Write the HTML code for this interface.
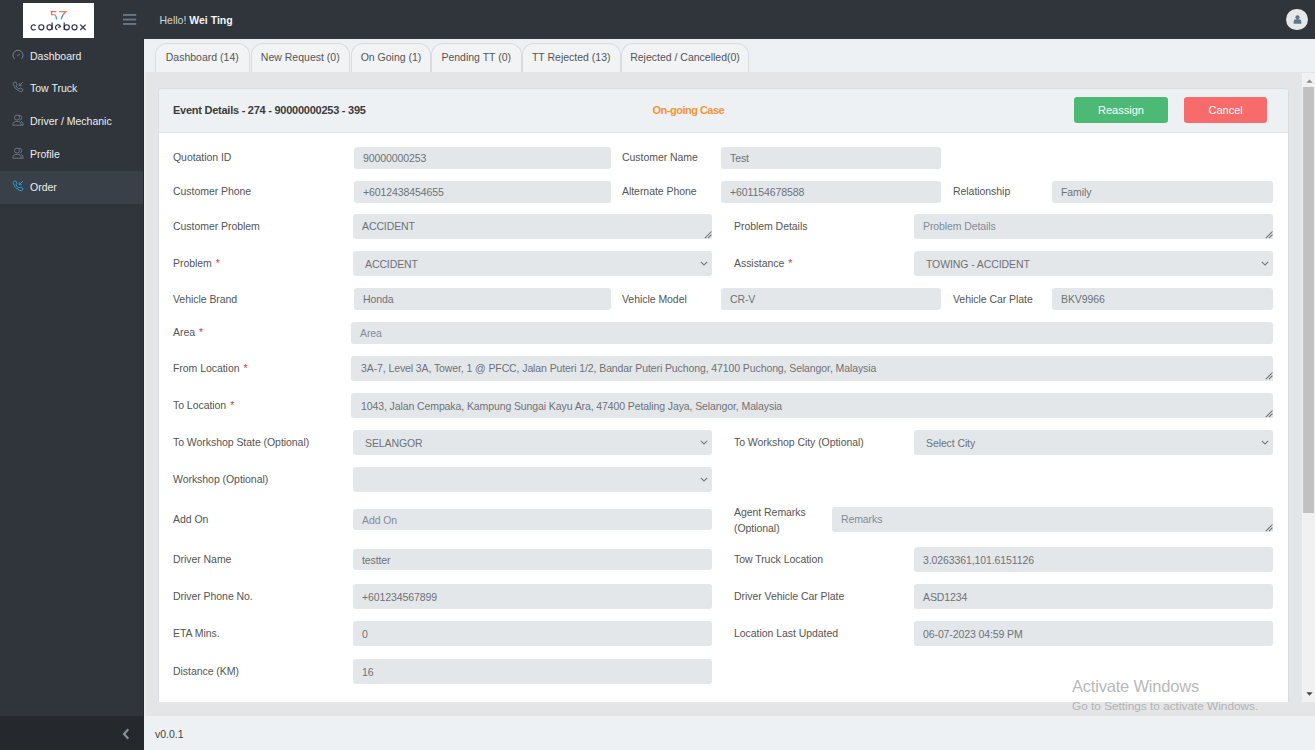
<!DOCTYPE html><html><head><meta charset="utf-8"><style>
*{margin:0;padding:0;box-sizing:border-box}
html,body{width:1315px;height:750px;overflow:hidden;background:#e4e5e6;font-family:"Liberation Sans", sans-serif}
.abs{position:absolute}
#hdr{position:absolute;left:0;top:0;width:1315px;height:39px;background:#30353b}
#side{position:absolute;left:0;top:39px;width:144px;height:677px;background:#30353b}
#sidebot{position:absolute;left:0;top:716px;width:144px;height:34px;background:#25292d}
#tabbar{position:absolute;left:144px;top:39px;width:1171px;height:33px;background:#eef1f4}
#footer{position:absolute;left:144px;top:716px;width:1171px;height:34px;background:#eef1f4}
#card{position:absolute;left:158px;top:87.5px;width:1130.5px;height:614.5px;background:#fff;border:1px solid #d9dde1;border-bottom:none;border-radius:4px 4px 0 0;overflow:hidden}
#cardhdr{position:absolute;left:0;top:0;width:100%;height:44px;background:#eef1f4;border-bottom:1.5px solid #dfe3e7}
.lbl{position:absolute;display:flex;align-items:center;padding-bottom:1px;font-size:10.5px;color:#555;white-space:nowrap;letter-spacing:-0.05px}
.req{color:#e53935;margin-left:4px}
.inp{position:absolute;background:#e4e7ea;border-radius:3px;display:flex;align-items:center;font-size:10.5px;color:#6d7278;white-space:nowrap;overflow:hidden;letter-spacing:-0.1px}
.inp.ph{color:#828b95}
.inp.ta{border-bottom-right-radius:0}
.chev{position:absolute}
.grip{position:absolute;right:0.5px;bottom:0.5px}
.tab{position:absolute;top:42.5px;height:29.5px;padding-bottom:2px;background:#f1f3f5;border:1px solid #d9dcdf;border-bottom:none;border-radius:12px 12px 0 0;font-size:10.5px;color:#555;display:flex;align-items:center;justify-content:center;white-space:nowrap}
.nav{position:absolute;left:0;width:144px;height:33px;display:flex;align-items:center;font-size:10.5px;color:#eceef0}
.nav span{position:absolute;left:30px}
.nav svg{position:absolute;left:12px;top:9.6px}
.btn{position:absolute;top:96.8px;height:26.2px;border-radius:3px;color:#fff;font-size:11px;display:flex;align-items:center;justify-content:center}
</style></head><body><div id="hdr"></div>
<div class="abs" style="left:23px;top:3px;width:71px;height:35px;background:#fff"></div>
<svg class="abs" style="left:0;top:0" width="100" height="40" viewBox="0 0 100 40">
<defs><linearGradient id="g5" x1="0" y1="0" x2="0.4" y2="1"><stop offset="0" stop-color="#ff3fa4"/><stop offset="0.45" stop-color="#ff8a3d"/><stop offset="1" stop-color="#1aa7ff"/></linearGradient>
<linearGradient id="g7" x1="1" y1="0" x2="0.2" y2="1"><stop offset="0" stop-color="#ff7a3d"/><stop offset="0.4" stop-color="#b98a7a"/><stop offset="1" stop-color="#1aa7ff"/></linearGradient></defs>
<path d="M56.3 11.7 H51.5 V14.7 H54 Q56.4 15 56.4 19.4" fill="none" stroke="url(#g5)" stroke-width="1.3"/>
<path d="M59.2 11.7 H65.8 Q62.2 14.5 61.2 19.4" fill="none" stroke="url(#g7)" stroke-width="1.3"/>
<g fill="none" stroke="#272a55" stroke-width="1.15">
<path d="M35.6 25.6 A2.6 2.6 0 1 0 35.6 29.2"/>
<circle cx="41.3" cy="27.3" r="2.55"/>
<circle cx="49.5" cy="27.3" r="2.55"/><path d="M52.1 22.6 V29.9"/>
<path d="M57.4 29.8 A2.55 2.55 0 1 1 60.5 26.6 L58.2 27.5"/>
<circle cx="66.8" cy="27.3" r="2.55"/><path d="M64.2 22.6 V29.9"/>
<circle cx="74.5" cy="27.3" r="2.55"/>
<path d="M80.3 24.6 L85.6 30 M85.6 24.6 L80.3 30"/>
</g></svg>
<svg class="abs" style="left:120px;top:10px" width="20" height="20" viewBox="0 0 20 20"><g fill="#6a7682"><rect x="3" y="4" width="13.2" height="1.9"/><rect x="3" y="8.6" width="13.2" height="1.9"/><rect x="3" y="13" width="13.2" height="1.9"/></g></svg>
<div class="abs" style="left:159.5px;top:12.5px;height:15px;line-height:15px;font-size:10.5px;color:#d4d7da;white-space:nowrap">Hello! <b style="color:#f4f5f6">Wei Ting</b></div>
<div class="abs" style="left:1286px;top:8.5px;width:21.5px;height:21.5px;border-radius:50%;background:#e6e7e8">
<svg class="abs" style="left:6.5px;top:6px" width="9" height="9" viewBox="0 0 9 9"><circle cx="4.5" cy="2.3" r="2.1" fill="#5f7588"/><path d="M0.7 8.7 V6.4 Q0.7 4.2 3 4.2 H6 Q8.3 4.2 8.3 6.4 V8.7 Z" fill="#5f7588"/></svg>
</div>
<div id="side"></div>
<div class="abs" style="left:0;top:170.5px;width:144px;height:33px;background:#3a4047"></div>
<div class="nav" style="top:39.2px"><svg width="12" height="12" viewBox="0 0 12 12"><path d="M2.6 9.9 A5 5 0 1 1 9.4 9.9" fill="none" stroke="#77848f" stroke-width="1"/><path d="M5.3 6.9 L7.9 5.1" stroke="#77848f" stroke-width="1"/></svg><span>Dashboard</span></div>
<div class="nav" style="top:71.0px"><svg width="12" height="12" viewBox="0 0 12 12"><path d="M2.2 1.2 L3.8 1 L5 3.6 L3.9 4.6 Q4.7 6.8 7.1 8.1 L8.2 7 L10.8 8.3 L10.6 10 Q9.6 11.2 7.6 10.4 Q2.4 8 1.3 3.6 Q1 2 2.2 1.2 Z" fill="none" stroke="#6e7d88" stroke-width="0.95"/><path d="M10.8 1.2 L7.3 4.7 M7.3 2.3 V4.7 H9.7" fill="none" stroke="#6e7d88" stroke-width="0.95"/></svg><span>Tow Truck</span></div>
<div class="nav" style="top:104.5px"><svg width="12" height="12" viewBox="0 0 12 12"><circle cx="5" cy="3.6" r="2.5" fill="none" stroke="#6a7883" stroke-width="0.95"/><path d="M0.8 11.2 Q0.8 7.3 5 7.3 Q9.2 7.3 9.2 11.2 Z" fill="none" stroke="#6a7883" stroke-width="0.95"/><path d="M6.7 1.3 A2.5 2.5 0 1 1 7.7 6.2 M9 7.4 Q11.3 7.9 11.3 11.2 H9.4" fill="none" stroke="#6a7883" stroke-width="0.95"/></svg><span>Driver / Mechanic</span></div>
<div class="nav" style="top:137.5px"><svg width="12" height="12" viewBox="0 0 12 12"><circle cx="5" cy="3.6" r="2.5" fill="none" stroke="#6a7883" stroke-width="0.95"/><path d="M0.8 11.2 Q0.8 7.3 5 7.3 Q9.2 7.3 9.2 11.2 Z" fill="none" stroke="#6a7883" stroke-width="0.95"/><path d="M6.7 1.3 A2.5 2.5 0 1 1 7.7 6.2 M9 7.4 Q11.3 7.9 11.3 11.2 H9.4" fill="none" stroke="#6a7883" stroke-width="0.95"/></svg><span>Profile</span></div>
<div class="nav" style="top:170.5px"><svg width="12" height="12" viewBox="0 0 12 12"><path d="M2.2 1.2 L3.8 1 L5 3.6 L3.9 4.6 Q4.7 6.8 7.1 8.1 L8.2 7 L10.8 8.3 L10.6 10 Q9.6 11.2 7.6 10.4 Q2.4 8 1.3 3.6 Q1 2 2.2 1.2 Z" fill="none" stroke="#2a9fd6" stroke-width="0.95"/><path d="M10.8 1.2 L7.3 4.7 M7.3 2.3 V4.7 H9.7" fill="none" stroke="#2a9fd6" stroke-width="0.95"/></svg><span>Order</span></div>
<div id="sidebot"></div>
<div class="abs" style="left:142.5px;top:39px;width:1.5px;height:677px;background:#272b30"></div>
<div class="abs" style="left:144px;top:72px;width:2px;height:644px;background:#ebecec"></div>
<svg class="abs" style="left:122px;top:728px" width="8" height="12" viewBox="0 0 8 12"><path d="M6.3 1.3 L2 6 L6.3 10.7" fill="none" stroke="#8593a0" stroke-width="2.1"/></svg>
<div id="tabbar"></div>
<div class="tab" style="left:154.5px;width:95.5px">Dashboard (14)</div>
<div class="tab" style="left:250.5px;width:99.5px">New Request (0)</div>
<div class="tab" style="left:351px;width:80px">On Going (1)</div>
<div class="tab" style="left:431px;width:90.5px">Pending TT (0)</div>
<div class="tab" style="left:522px;width:98.5px">TT Rejected (13)</div>
<div class="tab" style="left:621px;width:128px">Rejected / Cancelled(0)</div>
<div class="abs" style="left:1302px;top:73px;width:13px;height:629px;background:#f1f1f1"></div>
<div class="abs" style="left:1303px;top:87px;width:11px;height:426px;background:#c1c1c1"></div>
<svg class="abs" style="left:1305.5px;top:78.5px" width="7" height="4" viewBox="0 0 7 4"><path d="M0.3 3.8 L3.5 0.4 L6.7 3.8 Z" fill="#8a8a8a"/></svg>
<svg class="abs" style="left:1305.5px;top:692px" width="7" height="4" viewBox="0 0 7 4"><path d="M0.4 0.3 L3.5 3.7 L6.6 0.3 Z" fill="#454545"/></svg>
<div id="footer"></div>
<div class="abs" style="left:155px;top:727px;height:14px;line-height:14px;font-size:10.5px;color:#444">v0.0.1</div>
<div id="card"><div id="cardhdr"></div></div>
<div class="abs" style="left:173px;top:102px;height:16px;line-height:16px;font-size:11px;font-weight:bold;color:#3b3b3b;letter-spacing:-0.25px;white-space:nowrap">Event Details - 274 - 90000000253 - 395</div>
<div class="abs" style="left:652.5px;top:102px;height:16px;line-height:16px;font-size:11px;font-weight:bold;color:#f39530;letter-spacing:-0.5px;white-space:nowrap">On-going Case</div>
<div class="btn" style="left:1074px;width:94px;background:#4cba74">Reassign</div>
<div class="btn" style="left:1184.3px;width:82.7px;background:#f76b6b">Cancel</div>
<div class="lbl" style="left:173px;top:147px;height:21.5px;"><span>Quotation ID</span></div>
<div class="inp" style="left:354px;top:147px;width:257px;height:21.5px;padding-left:9px;padding-bottom:0px"><span>90000000253</span></div>
<div class="lbl" style="left:622px;top:147px;height:21.5px;"><span>Customer Name</span></div>
<div class="inp" style="left:721px;top:147px;width:220px;height:21.5px;padding-left:9px;padding-bottom:0px"><span>Test</span></div>
<div class="lbl" style="left:173px;top:181px;height:21.5px;"><span>Customer Phone</span></div>
<div class="inp" style="left:354px;top:181px;width:257px;height:21.5px;padding-left:9px;padding-bottom:0px"><span>+6012438454655</span></div>
<div class="lbl" style="left:622px;top:181px;height:21.5px;"><span>Alternate Phone</span></div>
<div class="inp" style="left:721px;top:181px;width:220px;height:21.5px;padding-left:9px;padding-bottom:0px"><span>+601154678588</span></div>
<div class="lbl" style="left:953px;top:181px;height:21.5px;"><span>Relationship</span></div>
<div class="inp" style="left:1052px;top:181px;width:221px;height:21.5px;padding-left:9px;padding-bottom:0px"><span>Family</span></div>
<div class="lbl" style="left:173px;top:214px;height:25px;"><span>Customer Problem</span></div>
<div class="inp ta" style="left:353px;top:214px;width:359px;height:25px;padding-left:9px;padding-bottom:1.4px"><span>ACCIDENT</span><svg class="grip" width="9" height="9" viewBox="0 0 9 9"><path d="M8.5 1.5 L1.8 8.2 M8.5 4.6 L4.9 8.2" stroke="#6a6e73" stroke-width="1.05"/></svg></div>
<div class="lbl" style="left:734px;top:214px;height:25px;"><span>Problem Details</span></div>
<div class="inp ph ta" style="left:914px;top:214px;width:359px;height:25px;padding-left:9px;padding-bottom:1.4px"><span>Problem Details</span><svg class="grip" width="9" height="9" viewBox="0 0 9 9"><path d="M8.5 1.5 L1.8 8.2 M8.5 4.6 L4.9 8.2" stroke="#6a6e73" stroke-width="1.05"/></svg></div>
<div class="lbl" style="left:173px;top:251px;height:25px;"><span>Problem<span class="req">*</span></span></div>
<div class="inp" style="left:353px;top:251px;width:359px;height:25px;padding-left:12px;padding-bottom:0px"><span>ACCIDENT</span><svg class="chev" width="8" height="5" viewBox="0 0 8 5" style="right:4px;top:10.2px"><path d="M0.8 0.8 L4 4 L7.2 0.8" fill="none" stroke="#757a80" stroke-width="1.15"/></svg></div>
<div class="lbl" style="left:734px;top:251px;height:25px;"><span>Assistance<span class="req">*</span></span></div>
<div class="inp" style="left:914px;top:251px;width:359px;height:25px;padding-left:12px;padding-bottom:0px"><span>TOWING - ACCIDENT</span><svg class="chev" width="8" height="5" viewBox="0 0 8 5" style="right:4px;top:10.2px"><path d="M0.8 0.8 L4 4 L7.2 0.8" fill="none" stroke="#757a80" stroke-width="1.15"/></svg></div>
<div class="lbl" style="left:173px;top:288px;height:22px;"><span>Vehicle Brand</span></div>
<div class="inp" style="left:354px;top:288px;width:257px;height:22px;padding-left:9px;padding-bottom:0px"><span>Honda</span></div>
<div class="lbl" style="left:622px;top:288px;height:22px;"><span>Vehicle Model</span></div>
<div class="inp" style="left:721px;top:288px;width:220px;height:22px;padding-left:9px;padding-bottom:0px"><span>CR-V</span></div>
<div class="lbl" style="left:953px;top:288px;height:22px;"><span>Vehicle Car Plate</span></div>
<div class="inp" style="left:1052px;top:288px;width:221px;height:22px;padding-left:9px;padding-bottom:0px"><span>BKV9966</span></div>
<div class="lbl" style="left:173px;top:322px;height:21.5px;"><span>Area<span class="req">*</span></span></div>
<div class="inp ph" style="left:351px;top:322px;width:922px;height:21.5px;padding-left:9px;padding-bottom:0px"><span>Area</span></div>
<div class="lbl" style="left:173px;top:355.5px;height:25.0px;"><span>From Location<span class="req">*</span></span></div>
<div class="inp ta" style="left:351px;top:355.5px;width:922px;height:25.0px;padding-left:10px;padding-bottom:0px"><span>3A-7, Level 3A, Tower, 1 @ PFCC, Jalan Puteri 1/2, Bandar Puteri Puchong, 47100 Puchong, Selangor, Malaysia</span><svg class="grip" width="9" height="9" viewBox="0 0 9 9"><path d="M8.5 1.5 L1.8 8.2 M8.5 4.6 L4.9 8.2" stroke="#6a6e73" stroke-width="1.05"/></svg></div>
<div class="lbl" style="left:173px;top:393px;height:25px;"><span>To Location<span class="req">*</span></span></div>
<div class="inp ta" style="left:351px;top:393px;width:922px;height:25px;padding-left:10px;padding-bottom:0px"><span>1043, Jalan Cempaka, Kampung Sungai Kayu Ara, 47400 Petaling Jaya, Selangor, Malaysia</span><svg class="grip" width="9" height="9" viewBox="0 0 9 9"><path d="M8.5 1.5 L1.8 8.2 M8.5 4.6 L4.9 8.2" stroke="#6a6e73" stroke-width="1.05"/></svg></div>
<div class="lbl" style="left:173px;top:430px;height:25px;"><span>To Workshop State (Optional)</span></div>
<div class="inp" style="left:353px;top:430px;width:359px;height:25px;padding-left:12px;padding-bottom:0px"><span>SELANGOR</span><svg class="chev" width="8" height="5" viewBox="0 0 8 5" style="right:4px;top:10.2px"><path d="M0.8 0.8 L4 4 L7.2 0.8" fill="none" stroke="#757a80" stroke-width="1.15"/></svg></div>
<div class="lbl" style="left:734px;top:430px;height:25px;"><span>To Workshop City (Optional)</span></div>
<div class="inp" style="left:914px;top:430px;width:359px;height:25px;padding-left:12px;padding-bottom:0px"><span>Select City</span><svg class="chev" width="8" height="5" viewBox="0 0 8 5" style="right:4px;top:10.2px"><path d="M0.8 0.8 L4 4 L7.2 0.8" fill="none" stroke="#757a80" stroke-width="1.15"/></svg></div>
<div class="lbl" style="left:173px;top:467px;height:25px;"><span>Workshop (Optional)</span></div>
<div class="inp" style="left:353px;top:467px;width:359px;height:25px;padding-left:9px;padding-bottom:0px"><span></span><svg class="chev" width="8" height="5" viewBox="0 0 8 5" style="right:4px;top:10.2px"><path d="M0.8 0.8 L4 4 L7.2 0.8" fill="none" stroke="#757a80" stroke-width="1.15"/></svg></div>
<div class="lbl" style="left:173px;top:509px;height:21px;"><span>Add On</span></div>
<div class="inp ph" style="left:353px;top:509px;width:359px;height:21px;padding-left:9px;padding-bottom:0px"><span>Add On</span></div>
<div class="lbl" style="left:734px;top:503.5px;height:32px;line-height:16px;white-space:normal;display:block;width:90px;padding-top:0px">Agent Remarks<br>(Optional)</div>
<div class="inp ph ta" style="left:832px;top:507px;width:441px;height:25px;padding-left:9px;padding-bottom:1.6px"><span>Remarks</span><svg class="grip" width="9" height="9" viewBox="0 0 9 9"><path d="M8.5 1.5 L1.8 8.2 M8.5 4.6 L4.9 8.2" stroke="#6a6e73" stroke-width="1.05"/></svg></div>
<div class="lbl" style="left:173px;top:549px;height:21px;"><span>Driver Name</span></div>
<div class="inp" style="left:353px;top:549px;width:359px;height:21px;padding-left:9px;padding-bottom:0px"><span>testter</span></div>
<div class="lbl" style="left:734px;top:547px;height:25px;"><span>Tow Truck Location</span></div>
<div class="inp" style="left:914px;top:547px;width:359px;height:25px;padding-left:9px;padding-bottom:0px"><span>3.0263361,101.6151126</span></div>
<div class="lbl" style="left:173px;top:584px;height:25px;"><span>Driver Phone No.</span></div>
<div class="inp" style="left:353px;top:584px;width:359px;height:25px;padding-left:9px;padding-bottom:0px"><span>+601234567899</span></div>
<div class="lbl" style="left:734px;top:584px;height:25px;"><span>Driver Vehicle Car Plate</span></div>
<div class="inp" style="left:914px;top:584px;width:359px;height:25px;padding-left:9px;padding-bottom:0px"><span>ASD1234</span></div>
<div class="lbl" style="left:173px;top:621px;height:25px;"><span>ETA Mins.</span></div>
<div class="inp" style="left:353px;top:621px;width:359px;height:25px;padding-left:9px;padding-bottom:0px"><span>0</span></div>
<div class="lbl" style="left:734px;top:621px;height:25px;"><span>Location Last Updated</span></div>
<div class="inp" style="left:914px;top:621px;width:359px;height:25px;padding-left:9px;padding-bottom:0px"><span>06-07-2023 04:59 PM</span></div>
<div class="lbl" style="left:173px;top:659px;height:25px;"><span>Distance (KM)</span></div>
<div class="inp" style="left:353px;top:659px;width:359px;height:25px;padding-left:9px;padding-bottom:0px"><span>16</span></div>
<div class="abs" style="left:1072px;top:677px;font-size:16.5px;color:rgba(160,160,160,0.75);white-space:nowrap;letter-spacing:-0.2px">Activate Windows</div>
<div class="abs" style="left:1072px;top:699px;font-size:11.8px;color:rgba(160,160,160,0.75);white-space:nowrap">Go to Settings to activate Windows.</div></body></html>
